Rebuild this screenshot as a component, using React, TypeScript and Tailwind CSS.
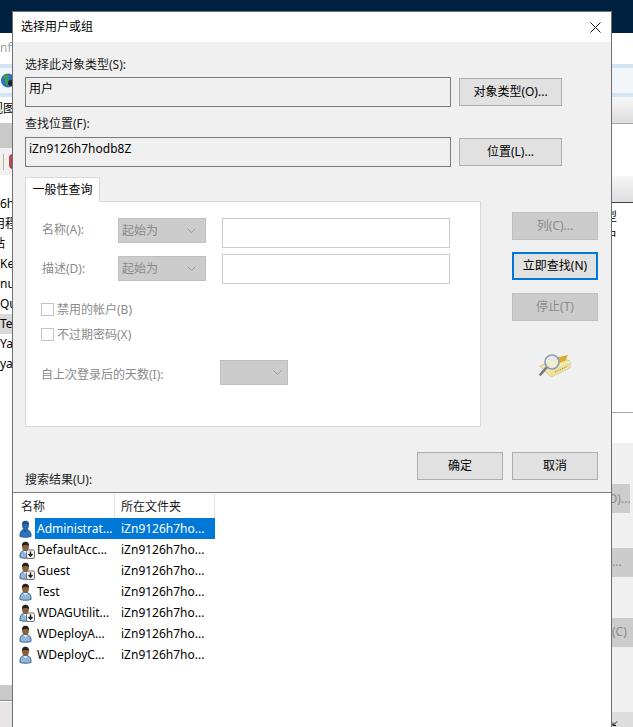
import React from "react";

const FONT = "font-['Noto_Sans','Noto_Sans_CJK_SC',sans-serif]";

interface UserRow {
  name: string;
  kind: "admin" | "user" | "disabled";
}

const rows: UserRow[] = [
  { name: "Administrat...", kind: "admin" },
  { name: "DefaultAcc...", kind: "disabled" },
  { name: "Guest", kind: "disabled" },
  { name: "Test", kind: "user" },
  { name: "WDAGUtilit...", kind: "disabled" },
  { name: "WDeployA...", kind: "user" },
  { name: "WDeployC...", kind: "user" },
];

const Chevron = () => (
  <svg width="9" height="5" viewBox="0 0 9 5" fill="none" stroke="#9a9a9a">
    <path d="M0.5 0.5 L4.5 4.5 L8.5 0.5" />
  </svg>
);

const UserIcon = ({ kind }: { kind: UserRow["kind"] }) => {
  const admin = kind === "admin";
  return (
    <svg width="17" height="18" viewBox="0 0 17 18" className="shrink-0">
      {/* shoulders */}
      <path
        d="M2 16.500 C1.500 12.500 3.500 10 5.500 9.500 L9 9.500 C11.500 10 13.500 12.500 13 16.500 C10 17.500 5 17.500 2 16.500 Z"
        fill={admin ? "#2f72bc" : "#8fb6dc"}
        stroke={admin ? "#1d528f" : "#34587f"}
        strokeWidth="0.900"
      />
      <path d="M5.500 10 L7.500 12.500 L9.500 10 Z" fill={admin ? "#1d528f" : "#e9eef4"} />
      {/* head */}
      <ellipse cx="7.500" cy="5.500" rx="3.400" ry="4.300" fill={admin ? "#2a69ae" : "#8a6038"} />
      <path
        d="M4 5 C3.800 1.800 5.500 0.800 7.500 0.800 C9.500 0.800 11.200 1.800 11 5 C9.800 3.500 5.200 3.500 4 5 Z"
        fill={admin ? "#1b4f8c" : "#26211d"}
      />
      {kind === "disabled" && (
        <g>
          <rect x="8.500" y="9" width="8" height="8.500" rx="1.500" fill="#f6f6f6" stroke="#6f6f6f" />
          <path d="M12.500 10.500 V15 M10.500 13 L12.500 15.200 L14.500 13" stroke="#1c1c1c" strokeWidth="1.400" fill="none" />
        </g>
      )}
    </svg>
  );
};

const FindIcon = () => (
  <svg width="34" height="26" viewBox="0 0 34 26">
    {/* folder box */}
    <path d="M3 14 L14 25 L33 16 L33 9 L22 5 Z" fill="#f0e4a2" stroke="#bdae72" strokeWidth="0.600" />
    <path d="M14 18 L33 9 L33 16 L14 25 Z" fill="#ecdf9c" />
    <path d="M14 18 L33 9" stroke="#fbf5cf" strokeWidth="0.900" />
    <path d="M18 20 L30 14.500" stroke="#9c8e52" strokeDasharray="1.500 1" />
    <path d="M18 6 L31 3 L28 9 L22 11 Z" fill="#d8ad2e" />
    {/* magnifier */}
    <path d="M10 15 L3.500 22.500" stroke="#77777d" strokeWidth="2.600" strokeLinecap="round" />
    <circle cx="15" cy="10" r="7" fill="#e3ebee" fillOpacity="0.9" stroke="#8d9bad" strokeWidth="1.600" />
    <path d="M9.500 11 C12 8.500 17 8.500 20.500 10 C19.500 14.500 12 15.500 9.500 11 Z" fill="#f5efc8" />
  </svg>
);

const PlainBox = ({ value }: { value: string }) => (
  <div className="w-[426px] h-[30px] border border-[#7a7a7a] bg-[#f0f0f0] pl-[3px] text-[12px] leading-[22px] text-black">
    {value}
  </div>
);

const ActionButton = ({ children, width }: { children: React.ReactNode; width: string }) => (
  <div className={`${width} h-[28px] border border-[#adadad] bg-[#e1e1e1] flex items-center justify-center text-[12px] text-black`}>
    {children}
  </div>
);

const DisabledButton = ({ children }: { children: React.ReactNode }) => (
  <div className="w-[86px] h-[28px] border border-[#bfbfbf] bg-[#cccccc] flex items-center justify-center text-[12px] text-[#8a8a8a]">
    {children}
  </div>
);

const DisabledSelect = ({ value }: { value: string }) => (
  <div className="w-[88px] h-[25px] border border-[#bfbfbf] bg-[#cccccc] flex items-center justify-between pl-[3px] pr-[9px] text-[12px] text-[#8a8a8a]">
    <span>{value}</span>
    <Chevron />
  </div>
);

const Check = ({ label }: { label: string }) => (
  <div className="flex items-center h-[13px] gap-[3px] -ml-[1px]">
    <div className="w-[13px] h-[13px] border border-[#c4c4c4] bg-white" />
    <span className="text-[12px] text-[#8a8a8a] whitespace-nowrap">{label}</span>
  </div>
);

// what is left of the window behind the dialog, on both sides
const LeftStrip = () => (
  <div className="absolute left-0 top-[33px] w-[13px] h-[694px] bg-white text-[12px] text-black">
    <div className="h-[31px] pt-[6px] text-[#a0a0a0] whitespace-nowrap">nfo</div>
    <div className="h-[33px] bg-[#f2f6fa] border-y-4 border-[#d5e4f2] flex items-center">
      <svg width="13" height="18" viewBox="0 0 13 18" className="shrink-0">
        <circle cx="8" cy="8.500" r="7" fill="#2c6fc4" />
        <path d="M3 4 C6 1 10 3 9 6 C8 9 11 10 9 13 C6 15 4 10 5 8 C5 6 3 7 3 4 Z" fill="#3f9a4e" />
        <circle cx="11" cy="11" r="3" fill="#222222" />
      </svg>
    </div>
    <div className="h-[26px] pt-[3px] whitespace-nowrap -ml-[9px]">视图</div>
    <div className="h-[25px] bg-[#c9c9c9]" />
    <div className="h-[27px] bg-[#f0f0f0] flex items-center">
      <div className="w-[1px] h-[16px] ml-[3px] bg-[#b9ad95]" />
      <div className="w-[5px] h-[15px] ml-[5px] rounded-l-full bg-[#b5484a]" />
    </div>
    <div className="pt-[19px] leading-[20px] whitespace-nowrap">
      <div>6h</div>
      <div className="-ml-[7px]">用程</div>
      <div className="-ml-[7px]">站</div>
      <div>Ke</div>
      <div>nu</div>
      <div>Qu</div>
      <div className="bg-[#d9d9d9]">Te</div>
      <div>Ya</div>
      <div>ya</div>
    </div>
    <div className="absolute left-0 top-[652px] w-full h-[15px] bg-[#c9c9c9]" />
    <div className="absolute left-0 top-[667px] w-full h-[1px] bg-[#8a8a8a]" />
    <div className="absolute left-0 top-[669px] w-full h-[25px] bg-[#e6e4e4]" />
  </div>
);

const RightStrip = () => (
  <div className="absolute right-0 top-[33px] w-[22px] h-[694px] bg-white text-[12px] text-black">
    <div className="absolute left-0 top-[31px] w-full h-[33px] bg-[#f2f6fa] border-y-4 border-[#d5e4f2]" />
    <div className="absolute left-0 top-[64px] w-full h-[27px] bg-gradient-to-b from-[#f6f6f6] to-[#dedede] border-b border-[#a8a8a8]" />
    <div className="absolute left-0 top-[143px] w-full h-[27px] bg-gradient-to-b from-[#f6f6f6] to-[#dedede] border-b border-[#3f3f5c]" />
    <div className="absolute left-0 top-[175px] whitespace-nowrap -ml-[18px]">类型</div>
    <div className="absolute left-0 top-[194px] whitespace-nowrap -ml-[6px]">户</div>
    <div className="absolute left-0 top-[379px] w-full h-[1px] bg-[#a8a8a8]" />
    <div className="absolute left-0 top-[410px] w-full h-[284px] bg-[#f0f0f0]" />
    <div className="absolute left-0 top-[451px] w-full h-[29px] bg-[#cccccc] text-[#8a8a8a] leading-[29px] whitespace-nowrap -ml-[3px]">O)...</div>
    <div className="absolute left-0 top-[515px] w-full h-[29px] bg-[#cccccc] text-[#8a8a8a] leading-[28px] pl-[1px]">...</div>
    <div className="absolute left-0 top-[585px] w-full h-[29px] bg-[#cccccc] text-[#8a8a8a] leading-[28px] pl-[1px]">(C)</div>
    <div className="absolute left-0 top-[679px] w-full h-[15px] bg-[#dddddd]">
      <svg width="6" height="6" viewBox="0 0 6 6" className="absolute left-[1px] top-[9px]" fill="none" stroke="#111111">
        <path d="M5 0.500 L1 4.500 M1 1.500 V4.500 H4" />
      </svg>
    </div>
  </div>
);

const App: React.FC = () => {
  return (
    <div className={`relative w-[633px] h-[727px] overflow-hidden bg-[#00213f] ${FONT}`}>
      <LeftStrip />
      <RightStrip />

      <div className="absolute left-[12px] top-[11px] w-[600px] h-[716px] border-x border-t border-[#6f6f73] bg-[#f0f0f0] flex flex-col">
        <div className="h-[30px] shrink-0 bg-white flex items-center justify-between pl-[8px] pr-[10px] text-[12px] text-black">
          <span>选择用户或组</span>
          <svg width="11" height="11" viewBox="0 0 11 11" fill="none" stroke="#111111">
            <path d="M0.500 0.500 L10.500 10.500 M10.500 0.500 L0.500 10.500" />
          </svg>
        </div>

        <div className="flex-1 flex flex-col pl-[12px] pt-[14px]">
          <div className="h-[18px] leading-[18px] text-[12px] text-[#1a1a1a]">选择此对象类型(S):</div>
          <div className="flex items-center gap-[8px] mt-[3px]">
            <PlainBox value="用户" />
            <ActionButton width="w-[103px]">对象类型(O)...</ActionButton>
          </div>
          <div className="h-[18px] leading-[18px] mt-[8px] text-[12px] text-[#1a1a1a]">查找位置(F):</div>
          <div className="flex items-center gap-[8px] mt-[4px]">
            <PlainBox value="iZn9126h7hodb8Z" />
            <ActionButton width="w-[103px]">位置(L)...</ActionButton>
          </div>

          <div className="flex mt-[10px]">
            <div>
              <div className="w-[75px] h-[25px] border-x border-t border-[#d9d9d9] bg-white flex items-center justify-center text-[12px] text-black relative z-10 -mb-[1px]">
                一般性查询
              </div>
              <div className="w-[456px] h-[226px] border border-[#d9d9d9] bg-white pl-[16px] pt-[16px] flex flex-col">
                <div className="flex items-start">
                  <span className="w-[76px] h-[25px] leading-[23px] text-[12px] text-[#8a8a8a]">名称(A):</span>
                  <DisabledSelect value="起始为" />
                  <div className="ml-[16px] w-[228px] h-[30px] border border-[#cccccc] bg-white" />
                </div>
                <div className="flex items-start mt-[6px]">
                  <span className="w-[76px] h-[27px] leading-[29px] text-[12px] text-[#8a8a8a]">描述(D):</span>
                  <div className="mt-[2px]">
                    <DisabledSelect value="起始为" />
                  </div>
                  <div className="ml-[16px] w-[228px] h-[30px] border border-[#cccccc] bg-white" />
                </div>
                <div className="mt-[19px]">
                  <Check label="禁用的帐户(B)" />
                </div>
                <div className="mt-[12px]">
                  <Check label="不过期密码(X)" />
                </div>
                <div className="flex items-center mt-[19px] -ml-[1px]">
                  <span className="w-[179px] mt-[4px] text-[12px] text-[#8a8a8a] whitespace-nowrap">自上次登录后的天数(I):</span>
                  <div className="w-[68px] h-[25px] border border-[#bfbfbf] bg-[#cccccc] flex items-center justify-end pr-[5px]">
                    <Chevron />
                  </div>
                </div>
              </div>
            </div>

            <div className="ml-[31px] pt-[35px] flex flex-col items-start">
              <DisabledButton>列(C)...</DisabledButton>
              <div className="mt-[12px] w-[86px] h-[28px] border-2 border-[#0078d7] bg-[#e1e1e1] flex items-center justify-center text-[12px] text-black">
                立即查找(N)
              </div>
              <div className="mt-[13px]">
                <DisabledButton>停止(T)</DisabledButton>
              </div>
              <div className="mt-[31px] ml-[25px]">
                <FindIcon />
              </div>
            </div>
          </div>

          <div className="flex items-start mt-[25px] h-[40px]">
            <span className="mt-[19px] h-[18px] leading-[18px] text-[12px] text-[#1a1a1a]">搜索结果(U):</span>
            <div className="ml-auto mr-[13px] flex gap-[9px]">
              <ActionButton width="w-[86px]">确定</ActionButton>
              <ActionButton width="w-[86px]">取消</ActionButton>
            </div>
          </div>
        </div>

        <div className="h-[235px] shrink-0 bg-white border-t border-[#7f7f7f] text-[12px]">
          <div className="flex h-[25px] text-[#1a1a1a]">
            <div className="w-[102px] border-r border-[#e5e5e5] pl-[8px] leading-[27px]">名称</div>
            <div className="w-[100px] border-r border-[#e5e5e5] pl-[6px] leading-[27px]">所在文件夹</div>
          </div>
          <div className="flex flex-col">
            {rows.map((row, i) => (
              <div key={row.name} className="flex items-center h-[21px] pl-[5px] w-[202px]">
                <UserIcon kind={row.kind} />
                <div className={`flex items-center h-full flex-1 whitespace-nowrap ${i === 0 ? "bg-[#0078d7] text-white" : "text-black"}`}>
                  <span className="w-[86px] pl-[2px] overflow-hidden">{row.name}</span>
                  <span className="text-[12px]">iZn9126h7ho...</span>
                </div>
              </div>
            ))}
          </div>
        </div>
      </div>
    </div>
  );
};

export default App;
